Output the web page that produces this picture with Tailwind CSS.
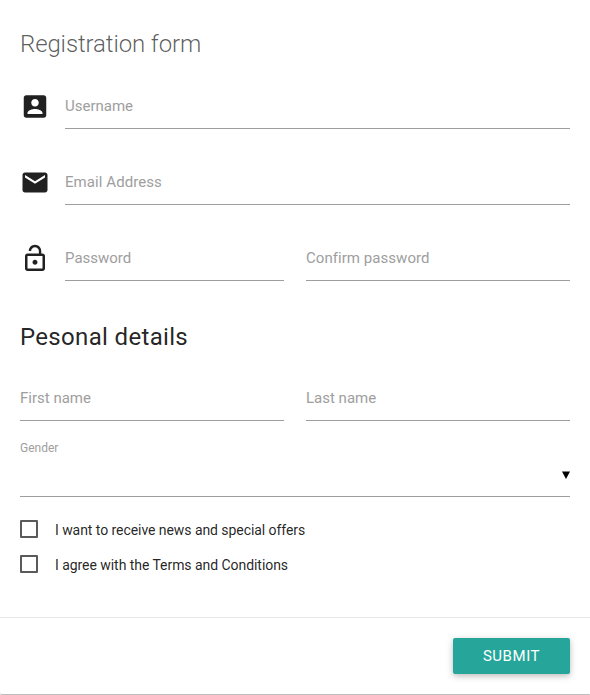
<!DOCTYPE html>
<html lang="en"><head><meta charset="utf-8"><title>Registration form</title>
<script src="https://cdn.jsdelivr.net/npm/@tailwindcss/browser@4"></script></head>
<body class="overflow-hidden bg-white font-[Roboto,sans-serif] text-black/87">
<form class="flex h-[694px] w-[591px] flex-col rounded-[2px] bg-white shadow-[0_2px_2px_0_rgba(0,0,0,0.14),0_1px_5px_0_rgba(0,0,0,0.12),0_3px_1px_-2px_rgba(0,0,0,0.2)]">
<main class="h-[617px] w-[590px] px-5 pt-5">
<h1 class="h-12 text-[24px] leading-[48px] font-light tracking-[-0.12px] text-black/65">Registration form</h1>
<div class="flex h-[76px] pt-[15px]">
<svg class="mt-[8px] mr-[15px] size-[30px] shrink-0" viewBox="0 -0.4 24 24" fill="currentColor"><path d="M3 5v14c0 1.1.89 2 2 2h14c1.1 0 2-.9 2-2V5c0-1.100-.9-2-2-2H5c-1.110 0-2 .9-2 2zm12 4c0 1.660-1.340 3-3 3s-3-1.340-3-3 1.340-3 3-3 3 1.340 3 3zm-9 8c0-2 4-3.100 6-3.100s6 1.100 6 3.100v1H6v-1z"/></svg>
<label class="h-[46px] flex-1 border-b border-[#9e9e9e] text-[15px] leading-[46px] text-[#9e9e9e]">Username</label></div>
<div class="flex h-[76px] pt-[15px]">
<svg class="mt-[8px] mr-[15px] size-[30px] shrink-0" viewBox="0 -0.4 24 24" fill="currentColor"><path d="M20 4H4c-1.100 0-1.990.9-1.990 2L2 18c0 1.100.9 2 2 2h16c1.100 0 2-.9 2-2V6c0-1.100-.9-2-2-2zm0 4l-8 5-8-5V6l8 5 8-5v2z"/></svg>
<label class="h-[46px] flex-1 border-b border-[#9e9e9e] text-[15px] leading-[46px] tracking-[0.07px] text-[#9e9e9e]">Email Address</label></div>
<div class="flex h-[76px] pt-[15px]">
<svg class="mt-[8px] mr-[15px] size-[30px] shrink-0" viewBox="0 -0.4 24 24" fill="currentColor"><path d="M12 17c1.100 0 2-.9 2-2s-.9-2-2-2-2 .9-2 2 .9 2 2 2zm6-9h-1V6c0-2.760-2.240-5-5-5S7 3.240 7 6h1.900c0-1.710 1.390-3.100 3.100-3.100 1.710 0 3.100 1.390 3.100 3.100v2H6c-1.100 0-2 .9-2 2v10c0 1.100.9 2 2 2h12c1.100 0 2-.9 2-2V10c0-1.100-.9-2-2-2zm0 12H6V10h12v10z"/></svg>
<label class="mr-[22px] h-[46px] w-[219px] border-b border-[#9e9e9e] text-[15px] leading-[46px] text-[#9e9e9e]">Password</label>
<label class="h-[46px] flex-1 border-b border-[#9e9e9e] text-[15px] leading-[46px] tracking-[0.05px] text-[#9e9e9e]">Confirm password</label></div>
<h2 class="mt-[17px] h-12 text-[24px] leading-[48px] tracking-[0.33px]">Pesonal details</h2>
<div class="mt-[14px] flex gap-[22px]">
<label class="h-[46px] w-[264px] border-b border-[#9e9e9e] text-[15px] leading-[46px] text-[#9e9e9e]">First name</label>
<label class="h-[46px] w-[264px] border-b border-[#9e9e9e] text-[15px] leading-[46px] text-[#9e9e9e]">Last name</label></div>
<div class="h-[76px] w-[550px] border-b border-[#9e9e9e] pt-[18px]"><label class="block h-[18px] text-[12px] leading-[18px] text-[#9e9e9e]">Gender</label><div class="mt-[14px] flex justify-end"><svg class="h-2 w-2" viewBox="0 0 8 8"><path d="M0 .5h8L4 8z"/></svg></div></div>
<label class="mt-[20px] flex h-[25px] gap-[17px] text-[14px] leading-[27px] tracking-[-0.06px]"><span class="mt-[3px] size-[18px] rounded-[1px] border-2 border-[#5a5a5a]"></span>I want to receive news and special offers</label>
<label class="mt-[10px] flex h-[25px] gap-[17px] text-[14px] leading-[27px] tracking-[-0.05px]"><span class="mt-[3px] size-[18px] rounded-[1px] border-2 border-[#5a5a5a]"></span>I agree with the Terms and Conditions</label>
</main>
<footer class="flex flex-1 justify-end rounded-b-[2px] border-t border-[#e8e8e8] pt-5 pr-[21px]"><button type="button" class="h-9 w-[117px] rounded-[2px] bg-[#26a69a] text-[15px] leading-9 tracking-[.55px] text-white shadow-[0_2px_5px_0_rgba(0,0,0,0.16),0_2px_10px_0_rgba(0,0,0,0.12)]">SUBMIT</button></footer>
</form><div class="ml-[2px] h-px w-[587px] bg-[#bdbdbd]"></div></body></html>
